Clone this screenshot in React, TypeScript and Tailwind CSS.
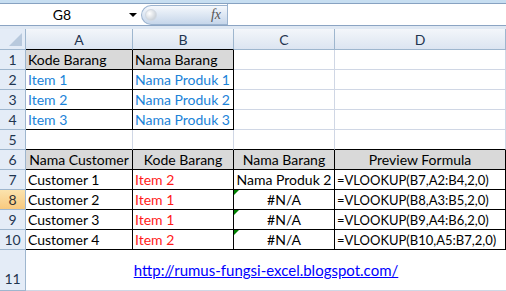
const font = { fontFamily: "Lato, 'Open Sans', sans-serif" };

type CellProps = {
  text?: string;
  color?: string;
  align?: "left" | "center";
  bg?: string;
  right?: boolean;
  bottom?: boolean;
  error?: boolean;
  small?: boolean;
};

const Cell = ({ text, color = "text-black", align = "left", bg = "bg-white", right, bottom, error, small }: CellProps) => (
  <div
    className={`relative h-[20px] flex items-end whitespace-nowrap overflow-visible pb-[1px] leading-[16px] border-r border-b ${bg} ${color} ${
      small ? "text-[13px]" : "text-[14px]"
    } ${right ? "border-r-black" : "border-r-[#d0d7e5]"} ${bottom ? "border-b-black" : "border-b-[#d0d7e5]"} ${
      align === "center" ? "justify-center" : "pl-[2px]"
    }`}
  >
    {error && (
      <span className="absolute left-0 top-0 w-0 h-0 border-t-[5px] border-t-[#008000] border-r-[5px] border-r-transparent" />
    )}
    {text}
  </div>
);

const RowHead = ({ n, active }: { n: number; active?: boolean }) => (
  <div
    className={`h-[20px] flex items-center justify-center text-[14px] border-r border-b border-[#9eb6ce] ${
      active ? "bg-gradient-to-b from-[#fbe3ad] to-[#f8c97e] text-[#333]" : "bg-[#e4ecf7] text-[#1f3550]"
    }`}
  >
    {n}
  </div>
);

const blue = "text-[#1c83d8]";
const red = "text-[#ff1a1a]";
const hdr = "bg-[#d9d9d9]";

export default function App() {
  return (
    <div className="w-[506px] h-[291px] overflow-hidden bg-white" style={font}>
      {/* formula bar */}
      <div className="h-[29px] flex flex-col bg-[#dfe8f3]">
        <div className="h-[3px] bg-[#c7def1]" />
        <div className="h-[1px] bg-[#87a2c1]" />
        <div className="h-[21px] flex bg-white">
          <div className="w-[141px] flex items-center relative">
            <span className="w-[124px] text-center text-[14px] text-black">G8</span>
            <span className="w-0 h-0 border-l-[4px] border-r-[4px] border-t-[4px] border-l-transparent border-r-transparent border-t-black ml-[5px]" />
          </div>
          <div className="w-[86px] h-[20px] mt-[1px] flex items-center rounded-l-full border border-r-0 border-[#9bb3cf] bg-gradient-to-b from-[#f5f8fc] to-[#c6d6ea]">
            <span className="ml-[3px] w-[12px] h-[12px] rounded-full bg-[radial-gradient(circle_at_35%_35%,#ffffff,#b9c2cc)] border border-[#d2d9e2]" />
            <span className="ml-auto mr-[6px] italic text-[14px] text-[#555] leading-none" style={{ fontFamily: "'Liberation Serif', serif" }}>
              fx
            </span>
          </div>
          <div className="flex-1 border-l border-[#9bb3cf]" />
        </div>
        <div className="h-[1px] bg-[#8ba4c3]" />
      </div>

      <div className="grid grid-cols-[26px_107px_101px_101px_171px]">
        {/* column headers */}
        <div className="h-[21px] bg-[#e4ecf7] border-r border-b border-[#9eb6ce] relative">
          <span className="absolute right-[3px] bottom-[3px] w-0 h-0 border-b-[13px] border-l-[13px] border-b-[#b8c9dd] border-l-transparent" />
        </div>
        {["A", "B", "C", "D"].map((c, i) => (
          <div
            key={c}
            className={`h-[21px] flex items-center justify-center text-[14px] text-[#1f3550] bg-gradient-to-b from-[#f3f6fa] to-[#dce5f1] border-r border-b border-r-[#9eb6ce] ${
              i < 2 ? "border-b-black" : "border-b-[#9eb6ce]"
            }`}
          >
            {c}
          </div>
        ))}

        {/* row 1 */}
        <RowHead n={1} />
        <Cell text="Kode Barang" bg={hdr} right bottom />
        <Cell text="Nama Barang" bg={hdr} right bottom />
        <Cell />
        <Cell />

        {/* rows 2-4 */}
        {[1, 2, 3].map((i) => (
          <div key={i} className="contents">
            <RowHead n={i + 1} />
            <Cell text={`Item ${i}`} color={blue} right bottom />
            <Cell text={`Nama Produk ${i}`} color={blue} right bottom />
            <Cell />
            <Cell />
          </div>
        ))}

        {/* row 5 */}
        <RowHead n={5} />
        <Cell bottom />
        <Cell bottom />
        <Cell bottom />
        <Cell bottom />

        {/* row 6 */}
        <RowHead n={6} />
        <Cell text="Nama Customer" bg={hdr} align="center" right bottom />
        <Cell text="Kode Barang" bg={hdr} align="center" right bottom />
        <Cell text="Nama Barang" bg={hdr} align="center" right bottom />
        <Cell text="Preview Formula" bg={hdr} align="center" right bottom />

        {/* rows 7-10 */}
        {[
          ["Customer 1", "Item 2", "Nama Produk 2", "=VLOOKUP(B7,A2:B4,2,0)"],
          ["Customer 2", "Item 1", "#N/A", "=VLOOKUP(B8,A3:B5,2,0)"],
          ["Customer 3", "Item 1", "#N/A", "=VLOOKUP(B9,A4:B6,2,0)"],
          ["Customer 4", "Item 2", "#N/A", "=VLOOKUP(B10,A5:B7,2,0)"],
        ].map((r, i) => (
          <div key={i} className="contents">
            <RowHead n={i + 7} active={i === 1} />
            <Cell text={r[0]} right bottom />
            <Cell text={r[1]} color={red} right bottom />
            <Cell text={r[2]} align="center" right bottom error={i > 0} />
            <Cell text={r[3]} right bottom small />
          </div>
        ))}

        {/* row 11 */}
        <div className="h-[41px] flex items-end justify-center text-[14px] text-[#1f3550] bg-[#e4ecf7] border-r border-b border-[#9eb6ce] pb-[1px]">
          11
        </div>
        <div className="col-span-4 h-[41px] flex items-center justify-center border-b border-[#d0d7e5] text-[15px]">
          <span className="text-[#0000ff] underline">http://rumus-fungsi-excel.blogspot.com/</span>
        </div>
      </div>
    </div>
  );
}
